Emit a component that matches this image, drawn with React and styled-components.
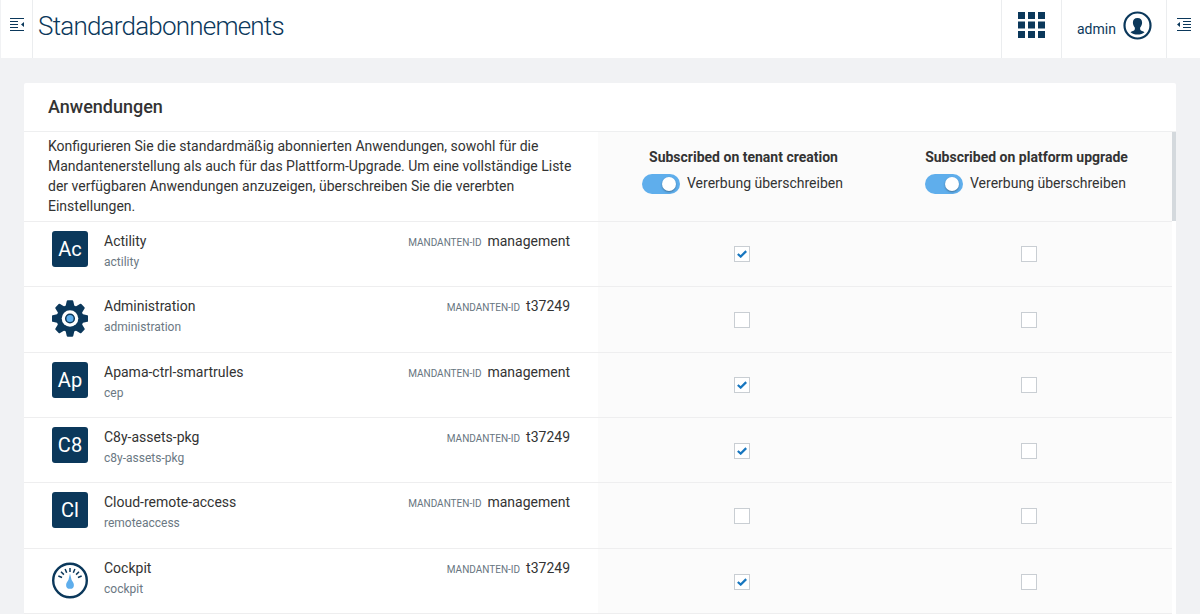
import React from 'react';
import styled, { createGlobalStyle } from 'styled-components';

const navy = '#0b385b';

const GlobalStyle = createGlobalStyle`
  * { box-sizing: border-box; }
  body {
    margin: 0;
    background: #f1f2f4;
    color: #333;
    font: 400 14px/20px Roboto, "Liberation Sans", sans-serif;
    overflow: hidden;
  }
`;

const Page = styled.div`
  height: 614px;
  overflow: hidden;
`;

const TopBar = styled.header`
  display: flex;
  height: 58px;
  background: #fff;
  border-left: 1px solid #f1f2f4;
`;

const NavToggle = styled.div`
  width: 32px;
  padding: 17px 0 0 9px;
  border-right: 1px solid #ebedef;
`;

const Title = styled.h1`
  flex: 1;
  margin: 0;
  padding: 9px 0 0 5px;
  color: ${navy};
  font-size: 26px;
  font-weight: 300;
  line-height: 34px;
  letter-spacing: -0.03em;
`;

const BarCell = styled.div`
  display: flex;
  align-items: flex-start;
  width: ${p => p.$width}px;
  padding: ${p => p.$pad};
  border-left: 1px solid #ebedef;
  color: ${navy};
`;

const UserName = styled.span`
  width: 46px;
  padding-top: 8px;
`;

const Card = styled.section`
  margin: 25px 24px 0;
  background: #fff;
  border-radius: 2px 2px 0 0;
`;

const CardTitle = styled.h2`
  margin: 0;
  height: 49px;
  padding: 12px 24px 0;
  border-bottom: 1px solid #eeeff0;
  font-size: 18px;
  font-weight: 500;
  line-height: 24px;
`;

const Scroller = styled.div`
  display: flex;
  align-items: flex-start;
`;

const List = styled.div`
  flex: 1;
`;

const ScrollThumb = styled.div`
  width: 4px;
  height: 89px;
  background: #d4d9dd;
`;

const Row = styled.div`
  display: flex;
  height: ${p => (p.$head ? '89.7px' : '65.44px')};
  border-bottom: 1px solid #eeeeef;
`;

const Info = styled.div`
  display: flex;
  width: 574px;
  padding: ${p => (p.$head ? '4px 24px 0' : '9px 28px 0')};
`;

const Intro = styled.p`
  margin: 0;
`;

const Option = styled.div`
  display: flex;
  flex-direction: column;
  align-items: center;
  width: 287px;
  padding: ${p => (p.$head ? '15px' : '24.7px')} ${p => p.$right || 0}px 0 ${p => p.$left || 0}px;
  background: #fbfbfb;
`;

const OptionTitle = styled.strong`
  font-weight: 700;
`;

const SwitchLabel = styled.label`
  display: flex;
  gap: 7px;
  margin-top: 6px;
  width: 203px;
`;

const Switch = styled.span`
  display: flex;
  justify-content: flex-end;
  width: 38px;
  height: 20px;
  margin-top: 1px;
  padding: 3px 4px;
  border-radius: 10px;
  background: #5faeec;
`;

const Knob = styled.span`
  width: 14px;
  height: 14px;
  border-radius: 50%;
  background: #fff;
  box-shadow: 0 1px 2px rgba(0, 0, 0, 0.35);
`;

const Checkbox = styled.span`
  display: flex;
  align-items: center;
  justify-content: center;
  width: 16px;
  height: 16px;
  border: 1px solid #c9ced3;
  background: #fff;
`;

const Badge = styled.div`
  width: 36px;
  height: 36px;
  border-radius: 3px;
  background: ${navy};
  color: #fff;
  font-size: 20px;
  line-height: 36px;
  text-align: center;
`;

const IconSlot = styled.div`
  width: 36px;
  height: 37px;
  margin-top: 4px;
`;

const Names = styled.div`
  flex: 1;
  margin-left: 16px;
`;

const AppName = styled.div`
  white-space: nowrap;
`;

const AppPath = styled.div`
  color: #6b7883;
  font-size: 12px;
  line-height: 20px;
  margin-top: 1px;
`;

const Tenant = styled.div`
  display: flex;
  align-items: baseline;
  align-self: flex-start;
  gap: 6px;
`;

const TenantLabel = styled.span`
  color: #67757f;
  font-size: 10px;
`;

const MenuIcon = ({ right }) => (
  <svg width="14" height="15" viewBox="0 0 14 15" display="block" fill={navy}>
    <path d="M0 1h14v1H0zM0 13h14v1H0z" />
    {right
      ? <path d="M6 4h8v1H6zM6 7h8v1H6zM6 10h8v1H6zM3 5v5l-3-2.500z" />
      : <path d="M0 4h8v1H0zM0 7h8v1H0zM0 10h8v1H0zM14 5v5l-3-2.500z" />}
  </svg>
);

const GridIcon = () => (
  <svg width="27" height="26" viewBox="0 0 27 26" fill={navy}>
    {[0, 9.5, 19].map(y => [0, 10, 20].map(x => <rect key={`${x}-${y}`} x={x} y={y} width="7" height="7" />))}
  </svg>
);

const UserIcon = () => (
  <svg width="29" height="29" viewBox="0 0 29 29">
    <circle cx="14.500" cy="14.500" r="13" fill="#fff" stroke={navy} strokeWidth="2.200" />
    <path fill={navy} d="M14.500 7c-3 0-4.700 1.900-4.600 4.700 0 1.800.8 3.600 1.900 4.800.2 1.300.1 2.400-.8 3-1.200.7-2.700.9-3.500 1.800 1.700 1.500 4.300 2.300 7 2.300s5.300-.8 7-2.300c-.8-.9-2.300-1.100-3.500-1.800-.9-.6-1-1.700-.8-3 1.100-1.200 1.900-3 1.900-4.800C19.200 8.900 17.500 7 14.500 7z" />
  </svg>
);

const GearIcon = () => (
  <svg width="36" height="37" viewBox="-18 -18.500 36 37">
    <g fill={navy}>
      <circle r="13.500" />
      {[0, 45, 90, 135, 180, 225, 270, 315].map(a => (
        <path key={a} transform={`rotate(${a})`} d="M-4.500-12L-3.300-17.300Q-3.100-18.200-2.200-18.200H2.200Q3.100-18.200 3.300-17.300L4.500-12z" />
      ))}
    </g>
    <circle r="8.300" fill="#fff" />
    <circle r="4.300" fill="#5faeec" stroke={navy} strokeWidth="1.500" />
  </svg>
);

const GaugeIcon = () => (
  <svg width="36" height="37" viewBox="-18 -18.500 36 37">
    <circle r="16.800" fill="#fff" stroke={navy} strokeWidth="2.400" />
    {[-69, -46, -23, 0, 23, 46, 69].map(a => (
      <path key={a} transform={`rotate(${a})`} d="M0-12.500V-8.500" stroke={navy} strokeWidth="1.500" />
    ))}
    <path d="M0-7L1.500-.8C2.400 1 3.900 2.100 3.900 4.400A3.900 3.900 0 0 1-3.900 4.400C-3.900 2.100-2.400 1-1.500-.8z" fill="#5faeec" />
  </svg>
);

const Tick = () => (
  <svg width="10" height="8" viewBox="0 0 10 8" fill="none" stroke="#1776bf" strokeWidth="2.200">
    <path d="M.8 4L3.700 6.600L9.200 1.100" />
  </svg>
);

const apps = [
  { name: 'Actility', path: 'actility', tenant: 'management', badge: 'Ac', created: true },
  { name: 'Administration', path: 'administration', tenant: 't37249', icon: <GearIcon /> },
  { name: 'Apama-ctrl-smartrules', path: 'cep', tenant: 'management', badge: 'Ap', created: true },
  { name: 'C8y-assets-pkg', path: 'c8y-assets-pkg', tenant: 't37249', badge: 'C8', created: true },
  { name: 'Cloud-remote-access', path: 'remoteaccess', tenant: 'management', badge: 'Cl' },
  { name: 'Cockpit', path: 'cockpit', tenant: 't37249', icon: <GaugeIcon />, created: true },
];

const OptionHead = ({ title, left, right }) => (
  <Option $head $left={left} $right={right}>
    <OptionTitle>{title}</OptionTitle>
    <SwitchLabel>
      <Switch><Knob /></Switch>
      Vererbung überschreiben
    </SwitchLabel>
  </Option>
);

export default function App() {
  return (
    <Page>
      <GlobalStyle />
      <TopBar>
        <NavToggle><MenuIcon /></NavToggle>
        <Title>Standardabonnements</Title>
        <BarCell $width={60} $pad="12px 0 0 16px"><GridIcon /></BarCell>
        <BarCell $width={105} $pad="11px 0 0 15px">
          <UserName>admin</UserName>
          <UserIcon />
        </BarCell>
        <BarCell $width={34} $pad="17px 0 0 10px"><MenuIcon right /></BarCell>
      </TopBar>
      <Card>
        <CardTitle>Anwendungen</CardTitle>
        <Scroller>
          <List>
            <Row $head>
              <Info $head>
                <Intro>
                  Konfigurieren Sie die standardmäßig abonnierten Anwendungen, sowohl für die
                  Mandantenerstellung als auch für das Plattform-Upgrade. Um eine vollständige Liste
                  der verfügbaren Anwendungen anzuzeigen, überschreiben Sie die vererbten
                  Einstellungen.
                </Intro>
              </Info>
              <OptionHead title="Subscribed on tenant creation" left={4} />
              <OptionHead title="Subscribed on platform upgrade" right={4} />
            </Row>
            {apps.map(app => (
              <Row key={app.name}>
                <Info>
                  {app.badge ? <Badge>{app.badge}</Badge> : <IconSlot>{app.icon}</IconSlot>}
                  <Names>
                    <AppName>{app.name}</AppName>
                    <AppPath>{app.path}</AppPath>
                  </Names>
                  <Tenant>
                    <TenantLabel>MANDANTEN-ID</TenantLabel>
                    <span>{app.tenant}</span>
                  </Tenant>
                </Info>
                <Option><Checkbox>{app.created && <Tick />}</Checkbox></Option>
                <Option><Checkbox /></Option>
              </Row>
            ))}
          </List>
          <ScrollThumb />
        </Scroller>
      </Card>
    </Page>
  );
}
